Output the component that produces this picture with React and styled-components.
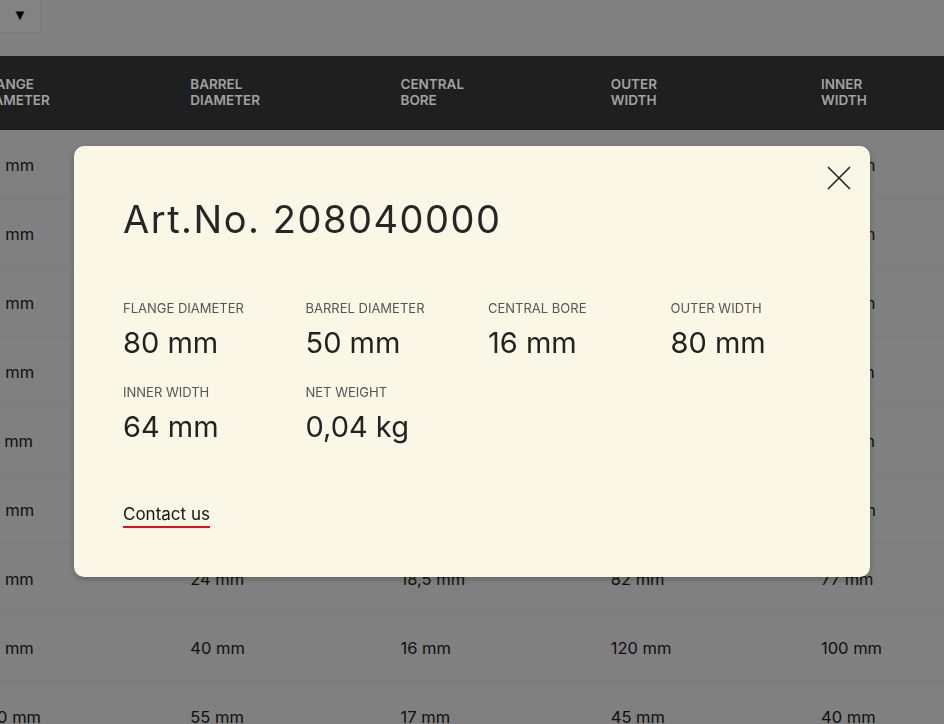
import React from "react";
import styled, { createGlobalStyle } from "styled-components";

const GlobalStyle = createGlobalStyle`
  html, body {
    margin: 0;
    padding: 0;
    background: #fafafa;
    font-family: Inter, "Liberation Sans", Arial, sans-serif;
    overflow: hidden;
  }
  * {
    box-sizing: border-box;
  }
`;

const Page = styled.div`
  width: 100vw;
  height: 100vh;
  overflow: hidden;
`;

const TopBar = styled.div`
  height: 56px;
  display: flex;
  align-items: flex-start;
`;

const DropButton = styled.button`
  width: 41px;
  height: 33px;
  padding: 0 0 3px;
  border: none;
  border-right: 1px solid #ececec;
  border-bottom: 1px solid #ececec;
  background: #fff;
  color: #000;
  font-size: 15px;
  line-height: 1;
  display: flex;
  align-items: center;
  justify-content: center;
`;

const Viewport = styled.div`
  width: 100%;
  overflow: hidden;
`;

/* scrolled horizontally: the first column is partly out of view */
const Table = styled.div`
  width: max-content;
  margin-left: -41px;
`;

const HeadRow = styled.div`
  position: relative;
  z-index: 2;
  display: grid;
  grid-template-columns: repeat(6, 210.25px);
  align-items: center;
  height: 74px;
  padding-bottom: 2px;
  background: #1f1f1f;
`;

const HeadCell = styled.div`
  padding-left: 21px;
  font-size: 13.5px;
  line-height: 16.5px;
  font-weight: 600;
  color: #a2a2a2;
  text-transform: uppercase;
  span {
    display: block;
  }
`;

const Row = styled.div`
  display: grid;
  grid-template-columns: repeat(6, 210.25px);
  align-items: center;
  height: 69px;
  padding-top: 2px;
  border-bottom: 1px solid #ededed;
`;

const Cell = styled.div`
  padding-left: 21px;
  font-size: 16.5px;
  color: #222;
  white-space: nowrap;
`;

const Backdrop = styled.div`
  position: fixed;
  inset: 0;
  z-index: 1;
  background: rgba(0, 0, 0, 0.485);
  display: flex;
  align-items: center;
  justify-content: center;
`;

const Modal = styled.div`
  position: relative;
  z-index: 3;
  width: 796px;
  padding: 50px 49px 49px;
  margin-top: -1px;
  background: #faf7e6;
  border-radius: 10px;
  box-shadow: 0 2px 6px rgba(0, 0, 0, 0.25);
  display: flex;
  flex-direction: column;
  align-items: flex-start;
`;

const CloseButton = styled.button`
  position: absolute;
  top: 20px;
  right: 19px;
  width: 24px;
  height: 24px;
  padding: 0;
  border: none;
  background: none;
  color: #222;
  cursor: pointer;
  svg {
    display: block;
  }
`;

const Title = styled.h2`
  margin: 0 0 58px;
  font-size: 38px;
  line-height: 46px;
  font-weight: 400;
  letter-spacing: 0.04em;
  color: #262626;
`;

const Specs = styled.dl`
  margin: 0 0 58px;
  width: 100%;
  display: grid;
  grid-template-columns: repeat(3, 182.5px) 1fr;
  row-gap: 23px;
`;

const Spec = styled.div`
  display: flex;
  flex-direction: column;
  gap: 9px;
`;

const SpecLabel = styled.dt`
  font-size: 13px;
  line-height: 16px;
  color: #555;
  text-transform: uppercase;
`;

const SpecValue = styled.dd`
  margin: 0;
  font-size: 29px;
  line-height: 36px;
  color: #222;
`;

const ContactLink = styled.a`
  font-size: 17px;
  line-height: 22px;
  padding-bottom: 1px;
  color: #111;
  text-decoration: none;
  border-bottom: 2px solid #e3101a;
`;

const columns = [
  ["Flange", "Diameter"],
  ["Barrel", "Diameter"],
  ["Central", "Bore"],
  ["Outer", "Width"],
  ["Inner", "Width"],
  ["Net", "Weight"],
];

const rows = [
  ["80 mm", "50 mm", "16 mm", "80 mm", "64 mm", "0,04 kg"],
  ["90 mm", "50 mm", "16 mm", "80 mm", "64 mm", "0,05 kg"],
  ["80 mm", "40 mm", "16 mm", "60 mm", "48 mm", "0,03 kg"],
  ["90 mm", "45 mm", "18 mm", "70 mm", "56 mm", "0,04 kg"],
  ["70 mm", "36 mm", "16 mm", "60 mm", "50 mm", "0,03 kg"],
  ["60 mm", "30 mm", "12 mm", "52 mm", "44 mm", "0,02 kg"],
  ["56 mm", "24 mm", "18,5 mm", "82 mm", "77 mm", "0,02 kg"],
  ["95 mm", "40 mm", "16 mm", "120 mm", "100 mm", "0,06 kg"],
  ["100 mm", "55 mm", "17 mm", "45 mm", "40 mm", "0,05 kg"],
];

const specs = [
  ["Flange diameter", "80 mm"],
  ["Barrel diameter", "50 mm"],
  ["Central bore", "16 mm"],
  ["Outer width", "80 mm"],
  ["Inner width", "64 mm"],
  ["Net weight", "0,04 kg"],
];

const App = () => {
  return (
    <>
      <GlobalStyle />
      <Page>
        <TopBar>
          <DropButton>▼</DropButton>
        </TopBar>
        <Viewport>
          <Table>
            <HeadRow>
              {columns.map((lines) => (
                <HeadCell key={lines.join(" ")}>
                  {lines.map((l) => (
                    <span key={l}>{l}</span>
                  ))}
                </HeadCell>
              ))}
            </HeadRow>
            {rows.map((row, i) => (
              <Row key={i}>
                {row.map((v, j) => (
                  <Cell key={j}>{v}</Cell>
                ))}
              </Row>
            ))}
          </Table>
        </Viewport>
        <Backdrop>
          <Modal>
            <CloseButton aria-label="Close">
              <svg width="24" height="24" viewBox="0 0 24 24" fill="none">
                <path
                  d="M1 1L23 23M23 1L1 23"
                  stroke="currentColor"
                  strokeWidth="1.6"
                />
              </svg>
            </CloseButton>
            <Title>Art.No. 208040000</Title>
            <Specs>
              {specs.map(([label, value]) => (
                <Spec key={label}>
                  <SpecLabel>{label}</SpecLabel>
                  <SpecValue>{value}</SpecValue>
                </Spec>
              ))}
            </Specs>
            <ContactLink href="#">Contact us</ContactLink>
          </Modal>
        </Backdrop>
      </Page>
    </>
  );
};

export default App;
